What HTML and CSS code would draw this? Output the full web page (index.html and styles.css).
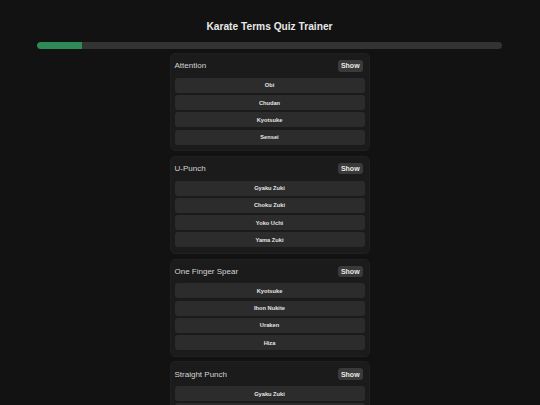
FILE: index.html
```html
<html>
<head>
	<title>Karate Terms Quiz Trainer</title>
	<link rel="stylesheet" href="styles.css">
</head>
<body>
	<div id="app">
		<h1 class="title">Karate Terms Quiz Trainer</h1>
		<div class="progress"><div class="progress-fill" style="width: 9.7%"></div></div>

		<div class="quiz-list">
			<div class="card">
				<div class="card-head">
					<span class="term">Attention</span>
					<button class="show-btn">Show</button>
				</div>
				<div class="options">
					<button class="option">Obi</button>
					<button class="option">Chudan</button>
					<button class="option">Kyotsuke</button>
					<button class="option">Sensei</button>
				</div>
			</div>

			<div class="card">
				<div class="card-head">
					<span class="term">U-Punch</span>
					<button class="show-btn">Show</button>
				</div>
				<div class="options">
					<button class="option">Gyaku Zuki</button>
					<button class="option">Choku Zuki</button>
					<button class="option">Yoko Uchi</button>
					<button class="option">Yama Zuki</button>
				</div>
			</div>

			<div class="card">
				<div class="card-head">
					<span class="term">One Finger Spear</span>
					<button class="show-btn">Show</button>
				</div>
				<div class="options">
					<button class="option">Kyotsuke</button>
					<button class="option">Ihon Nukite</button>
					<button class="option">Uraken</button>
					<button class="option">Hiza</button>
				</div>
			</div>

			<div class="card">
				<div class="card-head">
					<span class="term">Straight Punch</span>
					<button class="show-btn">Show</button>
				</div>
				<div class="options">
					<button class="option">Gyaku Zuki</button>
					<button class="option">Choku Zuki</button>
					<button class="option">Yoko Uchi</button>
					<button class="option">Yama Zuki</button>
				</div>
			</div>
		</div>
	</div>
</body>
</html>
```

FILE: styles.css
```css
html, body {
	margin: 0;
	padding: 0;
	background: #121212;
	color: #e6e6e6;
	font-family: "Liberation Sans", Arial, sans-serif;
}

body {
	height: 405px;
	overflow: hidden;
}

#app {
	padding: 20px 38px 0 37px;
}

.title {
	margin: 0 0 8px 0;
	text-align: center;
	font-size: 10.2px;
	font-weight: bold;
	line-height: 14px;
	color: #e8e8e8;
}

.progress {
	height: 7px;
	background: #333333;
	border-radius: 4px;
	overflow: hidden;
}

.progress-fill {
	height: 100%;
	background: #2e8b57;
	border-radius: 4px 0 0 4px;
}

.quiz-list {
	width: 200px;
	margin: 4px auto 0 auto;
	display: flex;
	flex-direction: column;
	gap: 4.6px;
}

.card {
	background: #1b1b1b;
	border: 1px solid #202020;
	border-radius: 5px;
	padding: 6px 4px 5.5px 4px;
}

.card-head {
	display: flex;
	align-items: center;
	justify-content: space-between;
	margin-bottom: 6.3px;
}

.term {
	font-size: 8px;
	color: #d4d4d4;
}

.show-btn {
	margin-right: 2px;
	height: 11.5px;
	width: 24.5px;
	padding: 0;
	border: none;
	border-radius: 3px;
	background: #3a3a3a;
	color: #e8e8e8;
	font-family: "Liberation Sans", Arial, sans-serif;
	font-size: 7px;
	font-weight: bold;
}

.options {
	display: flex;
	flex-direction: column;
	gap: 2.3px;
}

.option {
	height: 15px;
	padding: 0;
	border: none;
	border-radius: 3px;
	background: #2c2c2c;
	color: #e4e4e4;
	font-family: "Liberation Sans", Arial, sans-serif;
	font-size: 5.7px;
	font-weight: bold;
}
```
